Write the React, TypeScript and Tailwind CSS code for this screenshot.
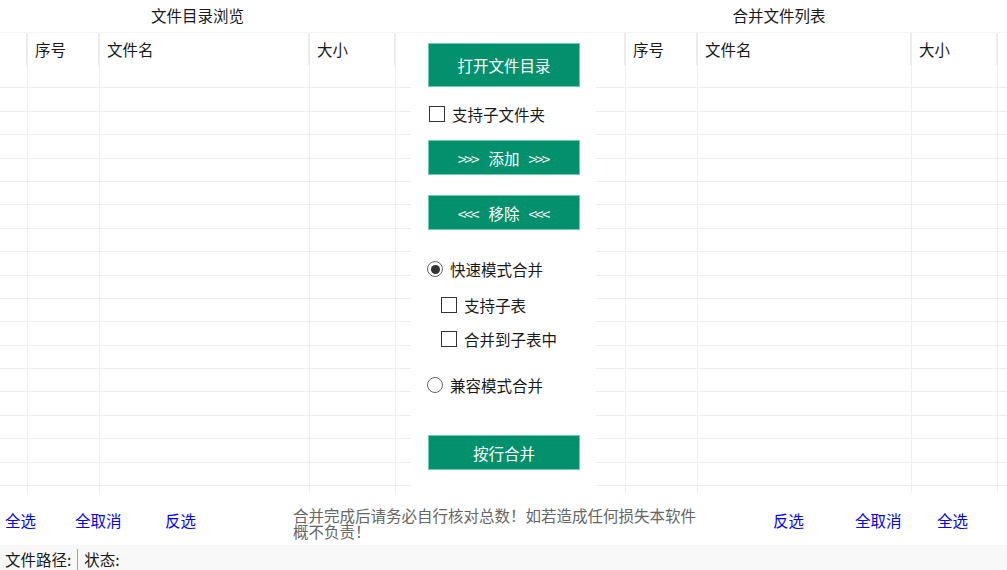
import React from 'react';

const LEFT_COLS = ['w-[28px]', 'w-[72px]', 'w-[210px]', 'w-[86px]', 'flex-1'];
const RIGHT_COLS = ['w-[30px]', 'w-[72px]', 'w-[214px]', 'w-[86px]', 'flex-1'];
const HEADERS = ['', '序号', '文件名', '大小', ''];

function FileTable({ cols }: { cols: string[] }) {
  const rows = Array.from({ length: 18 }, (_, i) => i);
  return (
    <div className="flex flex-1 flex-col overflow-hidden">
      {/* 表头 */}
      <div className="flex h-[32px] shrink-0">
        {cols.map((c, i) => (
          <div
            key={i}
            className={`${c} shrink-0 pl-[7px] pt-[8px] text-[15.5px] leading-[16px] text-[#1a1a1a] ${
              i < cols.length - 1 ? 'border-r-2 border-[#ececec]' : ''
            }`}
          >
            {HEADERS[i]}
          </div>
        ))}
      </div>
      {/* 空行 */}
      {rows.map((r) => (
        <div key={r} className="flex h-[23.4px] shrink-0 border-b border-[#ededed]">
          {cols.map((c, i) => (
            <div
              key={i}
              className={`${c} shrink-0 ${i < cols.length - 1 ? 'border-r border-[#efefef]' : ''}`}
            />
          ))}
        </div>
      ))}
      <div className="flex flex-1">
        {cols.map((c, i) => (
          <div
            key={i}
            className={`${c} shrink-0 ${i < cols.length - 1 ? 'border-r border-[#efefef]' : ''}`}
          />
        ))}
      </div>
    </div>
  );
}

function GreenButton({ children, className }: { children: React.ReactNode; className: string }) {
  return (
    <button
      className={`ml-[17px] flex w-[152px] items-center justify-center gap-[9px] border border-[#6acfb0] bg-[#03916d] text-[15.5px] leading-[16px] text-white ${className}`}
    >
      {children}
    </button>
  );
}

function Arrows({ dir }: { dir: '>' | '<' }) {
  return <span className="tracking-[-2px] pr-[2px]">{dir}{dir}{dir}</span>;
}

function CheckBox({ label, className }: { label: string; className: string }) {
  return (
    <label className={`flex h-[16px] items-center gap-[7px] ${className}`}>
      <span className="h-[16px] w-[16px] shrink-0 border border-[#333] bg-white" />
      <span className="text-[15.5px] leading-[16px] text-[#1a1a1a]">{label}</span>
    </label>
  );
}

function Radio({ label, checked, className }: { label: string; checked?: boolean; className: string }) {
  return (
    <label className={`flex h-[16px] items-center gap-[7px] ${className}`}>
      <span className="flex h-[16px] w-[16px] shrink-0 items-center justify-center rounded-full border border-[#666] bg-white">
        {checked && <span className="h-[9px] w-[9px] rounded-full bg-[#333]" />}
      </span>
      <span className="text-[15.5px] leading-[16px] text-[#1a1a1a]">{label}</span>
    </label>
  );
}

function Link({ children }: { children: React.ReactNode }) {
  return <span className="text-[15.5px] leading-[16px] text-[#0000ff]">{children}</span>;
}

export default function App() {
  return (
    <div className="flex h-[570px] w-[1007px] flex-col overflow-hidden bg-white font-['Noto_Sans_CJK_SC','Noto_Sans',sans-serif]">
      {/* 主区域 */}
      <div className="flex h-[493px] shrink-0">
        {/* 文件目录浏览 */}
        <div className="flex w-[411px] shrink-0 flex-col">
          <div className="h-[33px] shrink-0 border-b border-[#f4f4f4]">
            <div className="w-[395px] pt-[7px] text-center text-[15.5px] leading-[16px] text-[#1a1a1a]">
              文件目录浏览
            </div>
          </div>
          <FileTable cols={LEFT_COLS} />
        </div>

        {/* 操作面板 */}
        <div className="flex w-[185px] shrink-0 flex-col">
          <div className="h-[33px] shrink-0 border-b border-[#f4f4f4]" />
          <GreenButton className="mt-[10px] h-[44px]">打开文件目录</GreenButton>
          <CheckBox label="支持子文件夹" className="ml-[18px] mt-[19px]" />
          <GreenButton className="mt-[18px] h-[35px]">
            <Arrows dir=">" />
            <span>添加</span>
            <Arrows dir=">" />
          </GreenButton>
          <GreenButton className="mt-[20px] h-[35px]">
            <Arrows dir="<" />
            <span>移除</span>
            <Arrows dir="<" />
          </GreenButton>
          <Radio label="快速模式合并" checked className="ml-[16px] mt-[31px]" />
          <CheckBox label="支持子表" className="ml-[30px] mt-[20px]" />
          <CheckBox label="合并到子表中" className="ml-[30px] mt-[18px]" />
          <Radio label="兼容模式合并" className="ml-[16px] mt-[30px]" />
          <GreenButton className="mt-[42px] h-[35px]">按行合并</GreenButton>
        </div>

        {/* 合并文件列表 */}
        <div className="flex flex-1 flex-col">
          <div className="h-[33px] shrink-0 border-b border-[#f4f4f4]">
            <div className="w-[366px] pt-[7px] text-center text-[15.5px] leading-[16px] text-[#1a1a1a]">
              合并文件列表
            </div>
          </div>
          <FileTable cols={RIGHT_COLS} />
        </div>
      </div>

      {/* 操作链接 */}
      <div className="flex h-[52px] shrink-0 items-start">
        <div className="w-[75px] shrink-0 pl-[5px] pt-[15px]">
          <Link>全选</Link>
        </div>
        <div className="w-[90px] shrink-0 pt-[15px]">
          <Link>全取消</Link>
        </div>
        <div className="w-[128px] shrink-0 pt-[15px]">
          <Link>反选</Link>
        </div>
        <div className="w-[480px] shrink-0 pt-[14px] text-[15.5px] leading-[16px] text-[#666]">
          合并完成后请务必自行核对总数！如若造成任何损失本软件
          <br />
          概不负责！
        </div>
        <div className="w-[82px] shrink-0 pt-[15px]">
          <Link>反选</Link>
        </div>
        <div className="w-[82px] shrink-0 pt-[15px]">
          <Link>全取消</Link>
        </div>
        <div className="pt-[15px]">
          <Link>全选</Link>
        </div>
      </div>

      {/* 状态栏 */}
      <div className="flex flex-1 items-start bg-[#f8f8f8] pl-[5px] text-[15.5px] leading-[16px] text-[#1a1a1a]">
        <span className="pt-[6px]">文件路径:</span>
        <span className="mx-[6px] mt-[4px] h-[30px] w-px bg-[#a0a0a0]" />
        <span className="pt-[6px]">状态:</span>
      </div>
    </div>
  );
}
